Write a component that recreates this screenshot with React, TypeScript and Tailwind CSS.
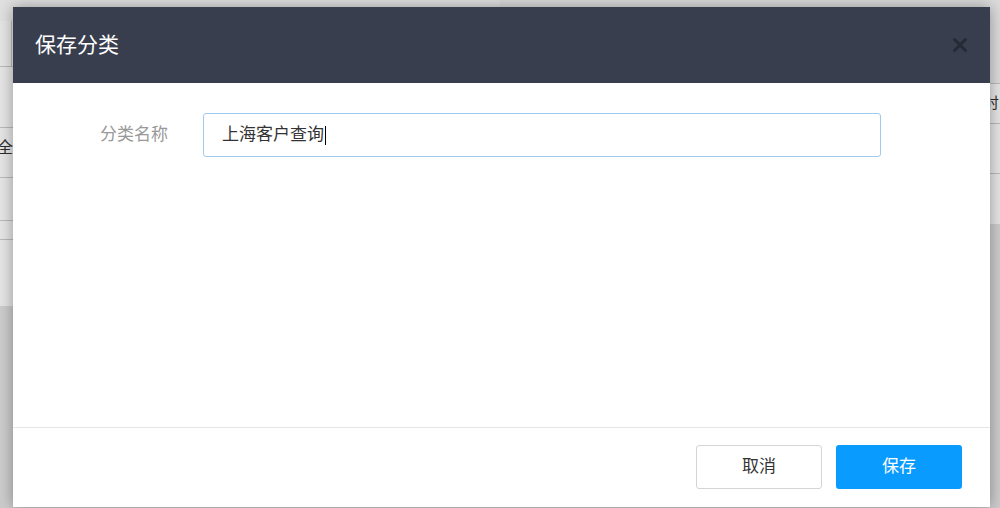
import React from "react";

const font = "font-['Liberation_Sans','Noto_Sans_CJK_SC',sans-serif]";

const App: React.FC = () => {
  return (
    <div className={`relative w-[1000px] h-[508px] overflow-hidden bg-[#f2f2f2] ${font}`}>
      {/* page behind the dialog */}
      <div className="flex h-full">
        <div className="w-[500px] shrink-0 flex flex-col">
          <div className="h-[21px] bg-[#fafafa]" />
          <div className="h-[46px] flex border-b border-[#cfcfcf] bg-white">
            <div className="w-[12px] border-r border-[#cfcfcf]" />
          </div>
          <div className="h-[61px] border-b border-[#cfcfcf] bg-white" />
          <div className="h-[50px] border-b border-[#cfcfcf] bg-white flex items-center pb-[10px]">
            <span className="ml-[-3px] text-[16px] text-[#333]">全部</span>
          </div>
          <div className="h-[43px] border-b border-[#cfcfcf] bg-white" />
          <div className="h-[19px] border-b border-[#cfcfcf] bg-white" />
          <div className="h-[66px] bg-white" />
          <div className="flex-1 bg-[#e4e4e4]" />
        </div>
        <div className="flex-1 min-w-0 flex flex-col">
          <div className="h-[84px] border-b border-[#cfcfcf] bg-[#f4f4f4]" />
          <div className="h-[40px] border-b border-[#cfcfcf] bg-white flex items-center pl-[484px]">
            <span className="text-[15px] text-[#333] whitespace-nowrap">时间</span>
          </div>
          <div className="h-[50px] border-b border-[#cfcfcf] bg-white" />
          <div className="h-[50px] bg-white" />
          <div className="flex-1 bg-[#e4e4e4]" />
        </div>
      </div>

      {/* mask */}
      <div className="absolute inset-0 bg-black/10" />

      {/* dialog */}
      <div className="absolute left-[13px] top-[7px] w-[977px] h-[500px] bg-white flex flex-col shadow-[0_0_14px_rgba(0,0,0,0.35)]">
        <div className="h-[76px] bg-[#383e4e] flex items-center justify-between pl-[22px] pr-[22px]">
          <span className="text-[21px] text-white">保存分类</span>
          <svg width="16" height="16" viewBox="0 0 16 16">
            <path d="M2.5 2.5 L13.5 13.5 M13.5 2.5 L2.5 13.5" stroke="#262a34" strokeWidth="3" strokeLinecap="round" />
          </svg>
        </div>

        <div className="flex-1 pt-[30px]">
          <div className="flex items-center">
            <label className="w-[155px] text-right text-[17px] text-[#999]">分类名称</label>
            <div className="ml-[35px] w-[678px] h-[44px] border border-[#9fcbef] rounded-[3px] flex items-center px-[18px] text-[17px] text-[#333]">
              上海客户查询
              <span className="w-[1px] h-[19px] bg-black ml-[1px]" />
            </div>
          </div>
        </div>

        <div className="h-[80px] border-t border-[#e6e6e6] flex items-start justify-end gap-[14px] pt-[17px] pr-[28px]">
          <button className="w-[126px] h-[44px] border border-[#d4d4d4] rounded-[3px] bg-white text-[17px] text-[#333]">
            取消
          </button>
          <button className="w-[126px] h-[44px] rounded-[3px] bg-[#0a9bff] text-[17px] text-white">
            保存
          </button>
        </div>
      </div>
    </div>
  );
};

export default App;
